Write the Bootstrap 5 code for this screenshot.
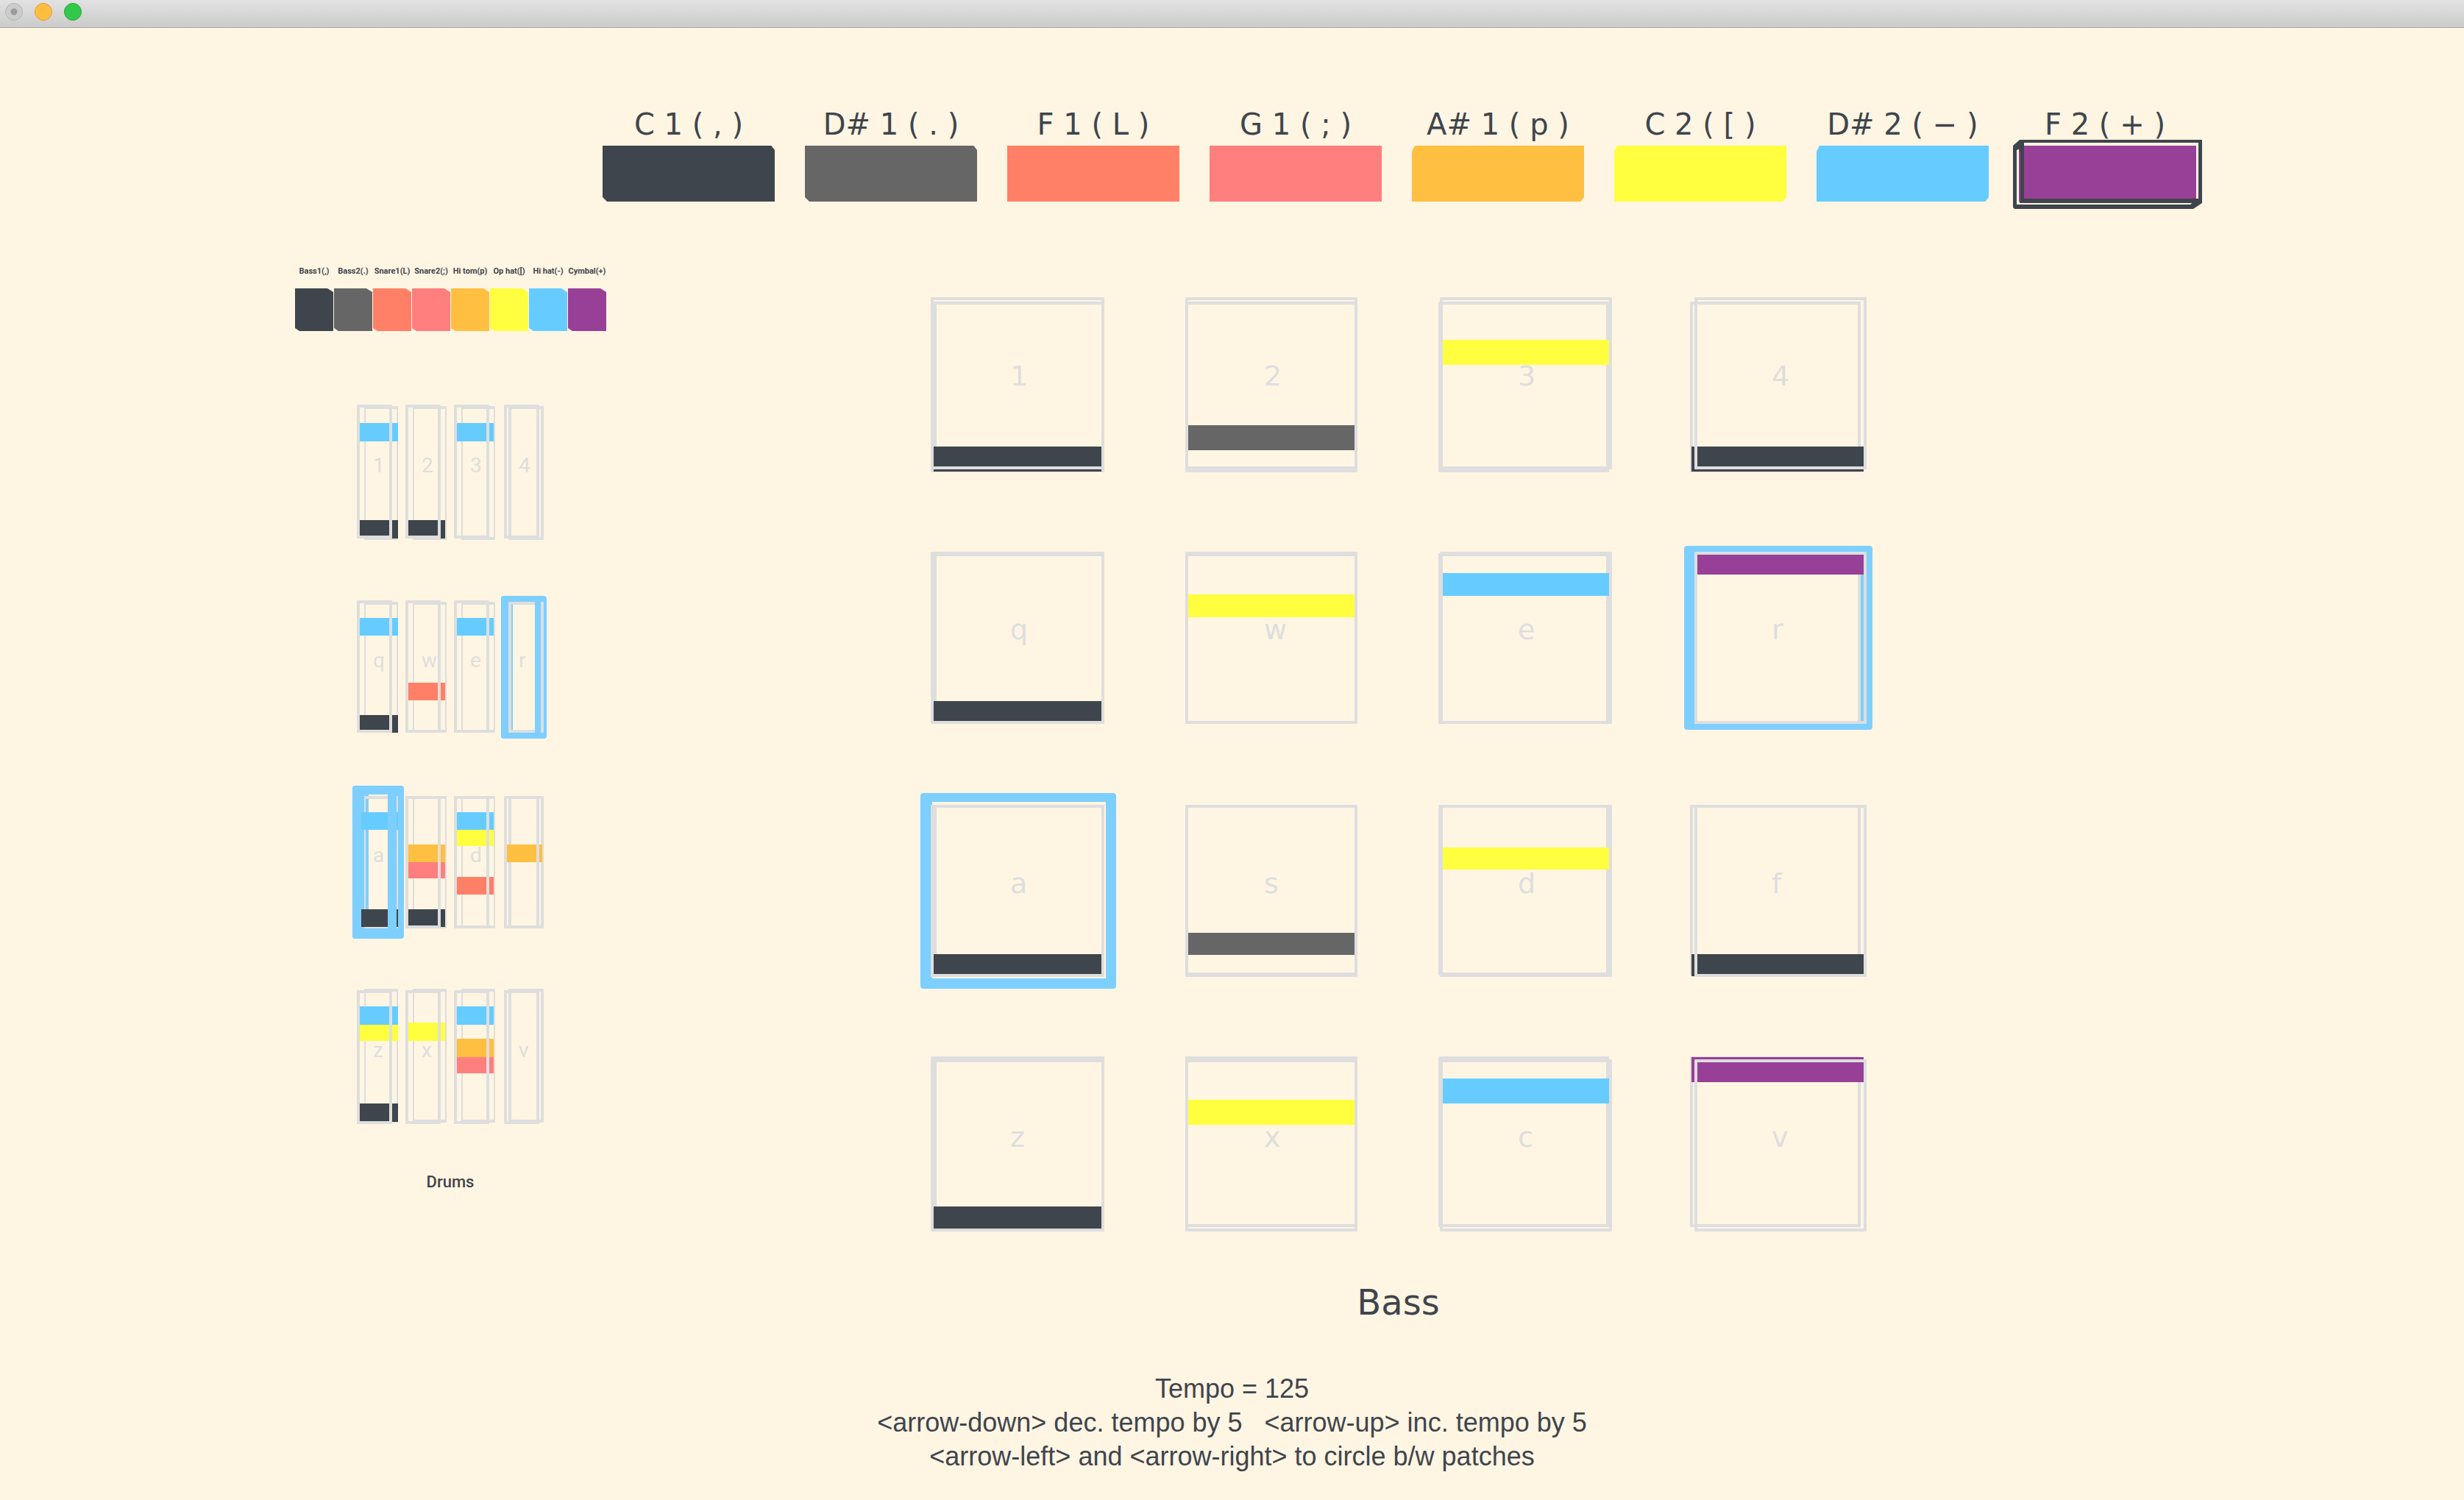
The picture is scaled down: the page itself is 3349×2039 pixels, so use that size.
<!DOCTYPE html>
<html lang="en">
<head>
<meta charset="utf-8">
<meta name="viewport" content="width=device-width, initial-scale=1">
<title>Drum and bass sequencer</title>
<link href="https://cdn.jsdelivr.net/npm/bootstrap@5.3.0/dist/css/bootstrap.min.css" rel="stylesheet">
<style>
  :root {
    --ink: #3f454c; --line: #dedede; --glow: #7dcfff;
    --n0: #3f454c; --n1: #666666; --n2: #ff8066; --n3: #ff7f7f;
    --n4: #ffbf40; --n5: #ffff3f; --n6: #66ccff; --n7: #984097;
  }
  body { background: #fff5e3; color: var(--ink); font-family: "DejaVu Sans", sans-serif; }
  button { color: inherit; }

  .titlebar { height: 38px; padding-left: 7px; gap: 16px; background: linear-gradient(#e3e2e3, #cbcbcb); border-bottom: 1px solid #a8a8a8; }
  .light { width: 24px; height: 24px; border: 1px solid #b2b2b2; background: radial-gradient(circle, #9c9c9c 0 4px, #cccccc 5px); }
  .light-min { background: #ffbd40; border-color: #e0a02c; }
  .light-max { background: #34c84a; border-color: #27a836; }

  /* note selectors */
  .keys-bass { grid-template-columns: repeat(8, minmax(0, 1fr)); column-gap: 41px; padding: 109px 371px 0 819px; }
  .keys-bass .caption-text { font-size: 40px; line-height: 44px; }
  .keys-bass .swatch { height: 76px; margin-top: 7px; }
  .keys-drums { grid-template-columns: repeat(8, 52px); column-gap: 1px; }
  .keys-drums .caption-text { font-family: Roboto, sans-serif; font-size: 11px; line-height: 16px; font-weight: 700; }
  .keys-drums .swatch { height: 58px; margin-top: 15px; clip-path: polygon(0 0, 44px 0, 100% 5px, 100% 100%, 6px 100%, 0 54px); }
  .key { min-width: 0; }
  .caption-text { white-space: nowrap; display: flex; justify-content: center; }
  .swatch { background: var(--c); }
  .cut-a { clip-path: polygon(0 0, 98% 0, 100% 6px, 100% 100%, 6px 100%, 0 70px); }
  .cut-b { clip-path: polygon(4px 0, 100% 0, 100% 70px, 98% 100%, 0 100%, 0 8px); }
  .key-frame { left: -8px; top: -8px; width: 257px; height: 94px; overflow: visible; }

  /* pads: ::before and ::after are the two skewed wire frames */
  .pad { position: relative; display: flex; align-items: flex-start; color: var(--line); isolation: isolate; }
  .pad::before, .pad::after { content: ""; position: absolute; border: 4px solid var(--line); border-radius: 1px; }
  .pad::before { inset: var(--at) var(--ar) var(--ab) var(--al); }
  .pad::after { inset: var(--bt) var(--br) var(--bb) var(--bl); }
  .hit { position: absolute; z-index: 2; left: var(--nl); right: var(--nr); height: var(--nh); top: calc(var(--nt) + (7 - var(--k)) * var(--step)); background: var(--c); }
  .halo { position: absolute; border: 8px solid var(--glow); border-radius: 4px; }

  .pads-bass { --step: 29px; display: grid; grid-template-columns: repeat(4, 236px); grid-auto-rows: 236px; gap: 109px; }
  .pads-bass .pad { padding: 85px 0 0 108px; font-size: 38px; line-height: 44px; }
  .pads-bass .pad::before { z-index: 0; }
  .pads-bass .halo { z-index: 1; }
  .pads-bass .pad::after { z-index: 3; }
  .pads-bass .pad:nth-child(4n+1) { --al: 0px; --ar: 0px; --bl: 0px; --br: 0px; --nl: 4px; --nr: 4px; }
  .pads-bass .pad:nth-child(4n+1)::before { border-left-width: 8px; }
  .pads-bass .pad:nth-child(4n+2) { --al: 1px; --ar: 1px; --bl: 1px; --br: 1px; --nl: 5px; --nr: 5px; }
  .pads-bass .pad:nth-child(4n+3) { --al: 0px; --ar: 4px; --bl: 2px; --br: 0px; --nl: 6px; --nr: 4px; }
  .pads-bass .pad:nth-child(4n+4) { --al: -3px; --ar: 7px; --bl: 3px; --br: -1px; --nl: -1px; --nr: 3px; }
  .pads-bass .pad:nth-child(n+1) { --at: 6px; --ab: -2px; --bt: 0px; --bb: 2px; --nt: 0px; --nh: 34px; }
  .pads-bass .pad:nth-child(n+5) { --at: 3px; --ab: 1px; --bt: 1px; --bb: 1px; --nt: 1px; --nh: 31px; }
  .pads-bass .pad:nth-child(n+9) { --at: 0px; --ab: 4px; --bt: 0px; --bb: 2px; --nt: 0px; --nh: 30px; }
  .pads-bass .pad:nth-child(n+13) { --at: -3px; --ab: 7px; --bt: 1px; --bb: 1px; --nt: -2px; --nh: 34px; }
  .pads-bass .halo-prev { border-width: 8px 16px 8px 14px; inset: -7px -9px -7px -11px; }
  .pads-bass .halo-prev ~ .hit { left: 3px; }
  .pads-bass .halo-now { inset: -16px -16px -14px -14px; border-width: 12px 14px 14px 16px; }

  .pads-drums { --step: 22px; display: grid; grid-template-columns: repeat(4, 56px); grid-auto-rows: 180px; gap: 85px 10px; }
  .pads-drums .pad { padding: 64px 0 0 22px; font-family: Roboto, sans-serif; font-size: 28px; line-height: 34px; }
  .pads-drums .halo { z-index: 0; }
  .pads-drums .pad::after { z-index: 1; border-width: 4px 2px; }
  .pads-drums .pad::before { z-index: 3; }
  .pads-drums .pad:nth-child(n) { --al: 0px; --ar: 8px; --bl: 10px; --br: 0px; --nl: 4px; --nr: 2px; }
  .pads-drums .pad:nth-child(4n+1) { --nr: 0px; }
  .pads-drums .pad:nth-child(4n+4) { --al: 2px; --ar: 6px; --bl: 8px; --nl: 6px; }
  .pads-drums .pad:nth-child(4n+4)::after { border-width: 4px; }
  .pads-drums .pad:nth-child(n+1) { --at: -2px; --ab: 0px; --bt: 0px; --bb: -2px; --nt: 1px; --nh: 25px; }
  .pads-drums .pad:nth-child(n+5) { --at: -1px; --ab: 1px; --bt: 1px; --bb: 1px; --nt: 1px; --nh: 24px; }
  .pads-drums .pad:nth-child(n+9) { --at: 0px; --ab: 0px; --bt: 0px; --bb: 0px; --nt: 0px; --nh: 24px; }
  .pads-drums .pad:nth-child(n+13) { --at: -1px; --ab: -1px; --bt: -3px; --bb: 1px; --nt: -1px; --nh: 25px; }
  .pads-drums .halo-prev { inset: -7px -4px -7px -2px; border-width: 8px 16px; }
  .pads-drums .pad.was-on::before { inset: -7px 4px -7px -2px; border: 8px solid var(--glow); border-left-width: 10px; border-radius: 4px; }
  .pads-drums .halo-now { border-width: 12px 22px 14px; inset: -14px -8px -14px -6px; }
  .pads-drums .pad.now-on::before { inset: -14px 2px -14px -6px; border: 12px solid var(--glow); border-bottom-width: 14px; border-radius: 4px; }

  .drums { margin-left: 401px; padding-top: 87px; }
  .drum-grid { margin: 102px 0 0 84px; width: 254px; }
  .bass { margin-left: 441px; padding-top: 130px; }
  .name-drums { font-family: Roboto, sans-serif; font-size: 22px; line-height: 30px; font-weight: 500; margin: 65px 0 0; }
  .name-bass { font-size: 48px; line-height: 56px; font-weight: 400; margin: 67px 0 0; }
  .help { font-family: "Liberation Sans", sans-serif; font-size: 36px; line-height: 46px; padding-top: 67px; }
  .help p { white-space: pre-wrap; }
</style>
</head>
<body>
<header class="titlebar d-flex align-items-start pt-1">
  <span class="light rounded-circle"></span>
  <span class="light light-min rounded-circle"></span>
  <span class="light light-max rounded-circle"></span>
</header>

<main>
  <section class="keys-bass d-grid" aria-label="Bass notes">
    <button class="key border-0 bg-transparent p-0" style="--c:var(--n0)"><span class="caption-text">C 1 ( , )</span><span class="swatch cut-a d-block"></span></button>
    <button class="key border-0 bg-transparent p-0" style="--c:var(--n1)"><span class="caption-text">D# 1 ( . )</span><span class="swatch cut-a d-block"></span></button>
    <button class="key border-0 bg-transparent p-0" style="--c:var(--n2)"><span class="caption-text">F 1 ( L )</span><span class="swatch d-block"></span></button>
    <button class="key border-0 bg-transparent p-0" style="--c:var(--n3)"><span class="caption-text">G 1 ( ; )</span><span class="swatch d-block"></span></button>
    <button class="key border-0 bg-transparent p-0" style="--c:var(--n4)"><span class="caption-text">A# 1 ( p )</span><span class="swatch cut-b d-block"></span></button>
    <button class="key border-0 bg-transparent p-0" style="--c:var(--n5)"><span class="caption-text">C 2 ( [ )</span><span class="swatch cut-b d-block"></span></button>
    <button class="key border-0 bg-transparent p-0" style="--c:var(--n6)"><span class="caption-text">D# 2 ( − )</span><span class="swatch cut-b d-block"></span></button>
    <button class="key border-0 bg-transparent p-0" style="--c:var(--n7)" aria-pressed="true"><span class="caption-text">F 2 ( + )</span><span class="swatch d-block position-relative">
      <svg class="key-frame position-absolute" viewBox="0 0 257 94" aria-hidden="true">
        <path fill="#3f454c" fill-rule="evenodd" d="M9 0H257V86H9ZM15 4V80H252V4Z"/>
        <path fill="#3f454c" d="M9 0 15 10 5 14V88H241L250 80 257 86 245 94H2L0 92V8Z"/>
        <path fill="#fff5e3" d="M5 14H8V88H5ZM11 86H239V88H11Z"/>
        <path fill="#984097" d="M8 16H10V84H8ZM15 8H249V80H15Z"/>
      </svg></span></button>
  </section>

  <div class="d-flex align-items-start">
    <section class="drums flex-shrink-0" aria-label="Drums">
      <div class="keys-drums d-grid">
        <button class="key border-0 bg-transparent p-0" style="--c:var(--n0)"><span class="caption-text">Bass1(,)</span><span class="swatch d-block"></span></button>
        <button class="key border-0 bg-transparent p-0" style="--c:var(--n1)"><span class="caption-text">Bass2(.)</span><span class="swatch d-block"></span></button>
        <button class="key border-0 bg-transparent p-0" style="--c:var(--n2)"><span class="caption-text">Snare1(L)</span><span class="swatch d-block"></span></button>
        <button class="key border-0 bg-transparent p-0" style="--c:var(--n3)"><span class="caption-text">Snare2(;)</span><span class="swatch d-block"></span></button>
        <button class="key border-0 bg-transparent p-0" style="--c:var(--n4)"><span class="caption-text">Hi tom(p)</span><span class="swatch d-block"></span></button>
        <button class="key border-0 bg-transparent p-0" style="--c:var(--n5)"><span class="caption-text">Op hat([)</span><span class="swatch d-block"></span></button>
        <button class="key border-0 bg-transparent p-0" style="--c:var(--n6)"><span class="caption-text">Hi hat(-)</span><span class="swatch d-block"></span></button>
        <button class="key border-0 bg-transparent p-0" style="--c:var(--n7)"><span class="caption-text">Cymbal(+)</span><span class="swatch d-block"></span></button>
      </div>
      <div class="drum-grid">
        <div class="pads-drums">
          <button class="pad border-0 bg-transparent">1<i class="hit" style="--k:0;--c:var(--n0)"></i><i class="hit" style="--k:6;--c:var(--n6)"></i></button>
          <button class="pad border-0 bg-transparent">2<i class="hit" style="--k:0;--c:var(--n0)"></i></button>
          <button class="pad border-0 bg-transparent">3<i class="hit" style="--k:6;--c:var(--n6)"></i></button>
          <button class="pad border-0 bg-transparent">4</button>
          <button class="pad border-0 bg-transparent">q<i class="hit" style="--k:0;--c:var(--n0)"></i><i class="hit" style="--k:6;--c:var(--n6)"></i></button>
          <button class="pad border-0 bg-transparent">w<i class="hit" style="--k:2;--c:var(--n2)"></i></button>
          <button class="pad border-0 bg-transparent">e<i class="hit" style="--k:6;--c:var(--n6)"></i></button>
          <button class="pad was-on border-0 bg-transparent">r<i class="halo halo-prev"></i></button>
          <button class="pad now-on border-0 bg-transparent">a<i class="halo halo-now"></i><i class="hit" style="--k:0;--c:var(--n0)"></i><i class="hit" style="--k:6;--c:var(--n6)"></i></button>
          <button class="pad border-0 bg-transparent">s<i class="hit" style="--k:0;--c:var(--n0)"></i><i class="hit" style="--k:3;--c:var(--n3)"></i><i class="hit" style="--k:4;--c:var(--n4)"></i></button>
          <button class="pad border-0 bg-transparent">d<i class="hit" style="--k:2;--c:var(--n2)"></i><i class="hit" style="--k:5;--c:var(--n5)"></i><i class="hit" style="--k:6;--c:var(--n6)"></i></button>
          <button class="pad border-0 bg-transparent">f<i class="hit" style="--k:4;--c:var(--n4)"></i></button>
          <button class="pad border-0 bg-transparent">z<i class="hit" style="--k:0;--c:var(--n0)"></i><i class="hit" style="--k:5;--c:var(--n5)"></i><i class="hit" style="--k:6;--c:var(--n6)"></i></button>
          <button class="pad border-0 bg-transparent">x<i class="hit" style="--k:5;--c:var(--n5)"></i></button>
          <button class="pad border-0 bg-transparent">c<i class="hit" style="--k:3;--c:var(--n3)"></i><i class="hit" style="--k:4;--c:var(--n4)"></i><i class="hit" style="--k:6;--c:var(--n6)"></i></button>
          <button class="pad border-0 bg-transparent">v</button>
        </div>
        <h2 class="name-drums text-center">Drums</h2>
      </div>
    </section>

    <section class="bass flex-shrink-0" aria-label="Bass">
      <div class="pads-bass">
        <button class="pad border-0 bg-transparent">1<i class="hit" style="--k:0;--c:var(--n0)"></i></button>
        <button class="pad border-0 bg-transparent">2<i class="hit" style="--k:1;--c:var(--n1)"></i></button>
        <button class="pad border-0 bg-transparent">3<i class="hit" style="--k:5;--c:var(--n5)"></i></button>
        <button class="pad border-0 bg-transparent">4<i class="hit" style="--k:0;--c:var(--n0)"></i></button>
        <button class="pad border-0 bg-transparent">q<i class="hit" style="--k:0;--c:var(--n0)"></i></button>
        <button class="pad border-0 bg-transparent">w<i class="hit" style="--k:5;--c:var(--n5)"></i></button>
        <button class="pad border-0 bg-transparent">e<i class="hit" style="--k:6;--c:var(--n6)"></i></button>
        <button class="pad border-0 bg-transparent">r<i class="halo halo-prev"></i><i class="hit" style="--k:7;--c:var(--n7)"></i></button>
        <button class="pad border-0 bg-transparent">a<i class="halo halo-now"></i><i class="hit" style="--k:0;--c:var(--n0)"></i></button>
        <button class="pad border-0 bg-transparent">s<i class="hit" style="--k:1;--c:var(--n1)"></i></button>
        <button class="pad border-0 bg-transparent">d<i class="hit" style="--k:5;--c:var(--n5)"></i></button>
        <button class="pad border-0 bg-transparent">f<i class="hit" style="--k:0;--c:var(--n0)"></i></button>
        <button class="pad border-0 bg-transparent">z<i class="hit" style="--k:0;--c:var(--n0)"></i></button>
        <button class="pad border-0 bg-transparent">x<i class="hit" style="--k:5;--c:var(--n5)"></i></button>
        <button class="pad border-0 bg-transparent">c<i class="hit" style="--k:6;--c:var(--n6)"></i></button>
        <button class="pad border-0 bg-transparent">v<i class="hit" style="--k:7;--c:var(--n7)"></i></button>
      </div>
      <h2 class="name-bass text-center">Bass</h2>
    </section>
  </div>
</main>

<footer class="help text-center">
  <p class="mb-0">Tempo = 125</p>
  <p class="mb-0">&lt;arrow-down&gt; dec. tempo by 5   &lt;arrow-up&gt; inc. tempo by 5</p>
  <p class="mb-0">&lt;arrow-left&gt; and &lt;arrow-right&gt; to circle b/w patches</p>
</footer>
<script src="https://cdn.jsdelivr.net/npm/bootstrap@5.3.0/dist/js/bootstrap.bundle.min.js"></script>
</body>
</html>
